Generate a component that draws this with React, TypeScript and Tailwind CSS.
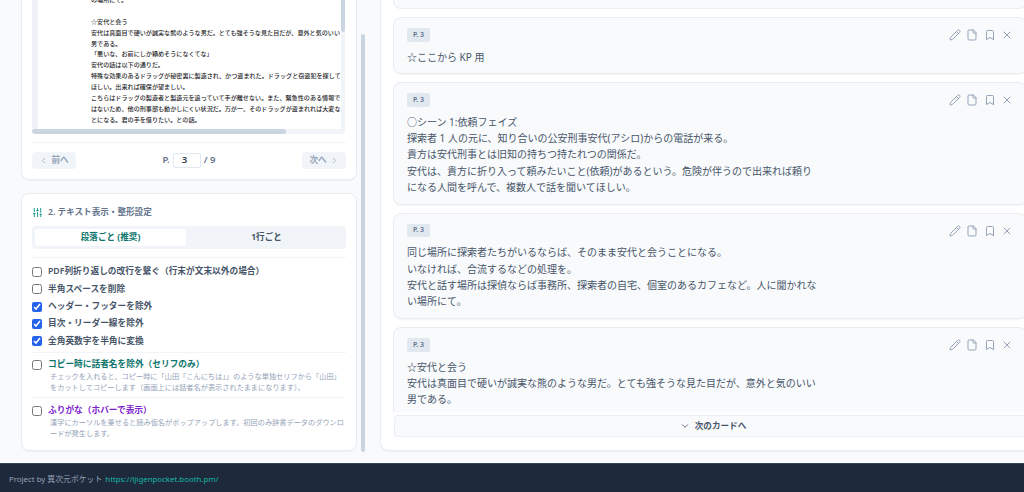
import { Bookmark, ChevronDown, ChevronLeft, ChevronRight, File, Pencil, SlidersVertical, X } from "lucide-react";

const pdfLines = [
  "の場所にて。",
  "",
  "☆安代と会う",
  "安代は真面目で硬いが誠実な熊のような男だ。とても強そうな見た目だが、意外と気のいい",
  "男である。",
  "「悪いな、お前にしか頼めそうになくてな」",
  "安代の話は以下の通りだ。",
  "特殊な効果のあるドラッグが秘密裏に製造され、かつ盗まれた。ドラッグと窃盗犯を探して",
  "ほしい。出来れば確保が望ましい。",
  "こちらはドラッグの製造者と製造元を追っていて手が離せない。また、緊急性のある情報で",
  "はないため、他の刑事部も動かしにくい状況だ。万が一、そのドラッグが盗まれれば大変なこ",
  "とになる。君の手を借りたい。との話。",
];

const options = [
  { label: "PDF列折り返しの改行を繋ぐ（行末が文末以外の場合）", checked: false },
  { label: "半角スペースを削除", checked: false },
  { label: "ヘッダー・フッターを除外", checked: true },
  { label: "目次・リーダー線を除外", checked: true },
  { label: "全角英数字を半角に変換", checked: true },
];

const cards = [
  ["☆ここから KP 用"],
  [
    "○シーン 1:依頼フェイズ",
    "探索者 1 人の元に、知り合いの公安刑事安代(アシロ)からの電話が来る。",
    "貴方は安代刑事とは旧知の持ちつ持たれつの関係だ。",
    "安代は、貴方に折り入って頼みたいこと(依頼)があるという。危険が伴うので出来れば頼り",
    "になる人間を呼んで、複数人で話を聞いてほしい。",
  ],
  [
    "同じ場所に探索者たちがいるならば、そのまま安代と会うことになる。",
    "いなければ、合流するなどの処理を。",
    "安代と話す場所は探偵ならば事務所、探索者の自宅、個室のあるカフェなど。人に聞かれな",
    "い場所にて。",
  ],
  [
    "☆安代と会う",
    "安代は真面目で硬いが誠実な熊のような男だ。とても強そうな見た目だが、意外と気のいい",
    "男である。",
  ],
];

function PdfPreview() {
  return (
    <div className="relative flex h-[160px] w-[313px] shrink-0 overflow-hidden rounded-b-[3px] bg-[#eef2f7]">
      <div className="ml-[6px] flex w-[400px] shrink-0 flex-col justify-end bg-white pb-[8px] pl-[53px]">
        {pdfLines.map((line, i) => (
          <div key={i} className="h-[10.95px] whitespace-nowrap text-[6.1px] leading-[10.95px] font-medium text-[#27272a]">
            {line}
          </div>
        ))}
      </div>
      {/* scrollbars */}
      <div className="absolute top-0 right-0 h-full w-[4px] bg-[#f1f5f9]">
        <div className="absolute top-0 h-[58px] w-full rounded-b-full bg-[#cbd5e1]" />
      </div>
      <div className="absolute bottom-0 left-0 h-[5px] w-full bg-[#f1f5f9]">
        <div className="h-full w-[254px] rounded-full bg-[#cbd5e1]" />
      </div>
    </div>
  );
}

function PagerButton({ label, side }: { label: string; side: "left" | "right" }) {
  return (
    <button className="flex h-[17px] w-[44px] items-center justify-center gap-[3px] rounded-[4px] bg-[#f1f5f9] text-[8.6px] font-semibold text-[#94a3b8]">
      {side === "left" && <ChevronLeft size={9} />}
      {label}
      {side === "right" && <ChevronRight size={9} />}
    </button>
  );
}

function NoteOption({
  label,
  desc,
  labelClass,
}: {
  label: string;
  desc: string;
  labelClass: string;
}) {
  return (
    <div className="flex gap-[6px]">
      <input type="checkbox" readOnly checked={false} className="mt-[1.5px] h-[10px] w-[10px] shrink-0" />
      <div className="min-w-0">
        <div className={`text-[8.7px] leading-[13px] font-bold ${labelClass}`}>{label}</div>
        <p className="pl-[2px] text-[7.2px] leading-[11px] text-[#94a3b8]">{desc}</p>
      </div>
    </div>
  );
}

function Card({ lines }: { lines: string[] }) {
  return (
    <div className="w-[634px] shrink-0 rounded-[8px] border border-[#e8edf3] bg-[#f8fafc] px-[13px] pt-[10px] pb-[8.7px] shadow-[0_1px_1px_rgba(15,23,42,0.04)]">
      <div className="flex items-center justify-between">
        <span className="flex h-[13.5px] w-[23px] items-center justify-center rounded-[2px] bg-[#e2e8f0] text-[7px] font-semibold text-[#64748b]">
          P. 3
        </span>
        <div className="flex items-center gap-[5.5px] text-[#94a3b8]">
          <Pencil size={12} />
          <File size={12} />
          <Bookmark size={12} />
          <X size={12} />
        </div>
      </div>
      <div className="mt-[7px] text-[10px] leading-[16.25px] text-[#475569]">
        {lines.map((line, i) => (
          <div key={i} className="whitespace-nowrap">
            {line}
          </div>
        ))}
      </div>
    </div>
  );
}

export default function App() {
  return (
    <div className="flex h-[492px] w-[1024px] flex-col overflow-hidden bg-[#f8fafc] font-['Noto_Sans','Noto_Sans_CJK_JP',sans-serif]">
      <div className="relative flex h-[463px] shrink-0 overflow-hidden">
        {/* left column */}
        <div className="flex w-[380px] shrink-0 flex-col justify-end gap-[13px] pr-[23px] pb-[12px] pl-[21px]">
          <div className="flex shrink-0 flex-col rounded-b-[8px] border border-t-0 border-[#e8edf3] bg-white px-[10px] pb-[10px] shadow-[0_1px_1px_rgba(15,23,42,0.04)]">
            <PdfPreview />
            <div className="mt-[8px] flex items-center justify-between border-t border-[#f1f5f9] pt-[9px]">
              <PagerButton label="前へ" side="left" />
              <div className="flex items-center gap-[3px] text-[9.6px] font-semibold text-[#64748b]">
                <span>P.</span>
                <span className="flex h-[15px] w-[28px] items-center rounded-[2px] border border-[#e2e8f0] bg-white pl-[8px] text-[#334155]">3</span>
                <span>/ 9</span>
              </div>
              <PagerButton label="次へ" side="right" />
            </div>
          </div>

          <div className="flex h-[258px] shrink-0 flex-col rounded-[8px] border border-[#e8edf3] bg-white px-[10px] pt-[12px] shadow-[0_1px_1px_rgba(15,23,42,0.04)]">
            <div className="flex items-center gap-[5px] text-[8.6px] font-semibold text-[#64748b]">
              <SlidersVertical size={11} className="text-[#0d9488]" />
              <span>2. テキスト表示・整形設定</span>
            </div>
            <div className="mt-[7px] flex h-[23px] items-center rounded-[4px] bg-[#f1f5f9] p-[3px] text-[8.6px] font-bold">
              <div className="flex h-[17px] w-[151px] items-center justify-center rounded-[3px] bg-white text-[#0f766e]">段落ごと (推奨)</div>
              <div className="flex h-[17px] flex-1 items-center justify-center pl-[4px] text-[#475569]">1行ごと</div>
            </div>
            <div className="mt-[8px] flex flex-col gap-[4.4px] border-t border-[#f1f5f9] pt-[7.4px]">
              {options.map((o) => (
                <label key={o.label} className="flex h-[13px] items-center gap-[6px] text-[8.7px] font-semibold text-[#475569]">
                  <input type="checkbox" readOnly checked={o.checked} className="h-[10px] w-[10px] shrink-0 accent-[#2563eb]" />
                  {o.label}
                </label>
              ))}
            </div>
            <div className="mt-[4.2px] border-t border-[#f1f5f9] pt-[5px] pb-[4px]">
              <NoteOption
                label="コピー時に話者名を除外（セリフのみ）"
                labelClass="text-[#0f766e]"
                desc="チェックを入れると、コピー時に「山田「こんにちは」」のような単独セリフから「山田」をカットしてコピーします（画面上には話者名が表示されたままになります）。"
              />
            </div>
            <div className="border-t border-[#f1f5f9] pt-[6px]">
              <NoteOption
                label="ふりがな（ホバーで表示）"
                labelClass="text-[#7e22ce]"
                desc="漢字にカーソルを乗せると読み仮名がポップアップします。初回のみ辞書データのダウンロードが発生します。"
              />
            </div>
          </div>
        </div>

        {/* page scrollbar */}
        <div className="absolute top-[34px] left-[361px] h-[418px] w-[4px] rounded-full bg-[#cbd5e1]" />

        {/* right column */}
        <div className="flex min-w-0 flex-1 flex-col justify-end pb-[12px]">
          <div className="h-[470px] w-[670px] shrink-0 rounded-l-[8px] border border-[#e8edf3] bg-white pl-[12px] shadow-[0_1px_1px_rgba(15,23,42,0.04)]">
            <div className="flex h-[430px] flex-col gap-[8px] overflow-hidden">
              <div className="h-[27px] w-[634px] shrink-0 rounded-b-[8px] border border-[#e8edf3] bg-[#f8fafc]" />
              {cards.map((lines, i) => (
                <Card key={i} lines={lines} />
              ))}
            </div>
            <button className="mt-[3px] ml-[1px] flex h-[22px] w-[638px] items-center justify-center gap-[5px] rounded-[4px] border border-[#e8edf3] bg-[#f8fafc] text-[8.6px] font-bold text-[#475569]">
              <ChevronDown size={10} />
              次のカードへ
            </button>
          </div>
        </div>
      </div>

      <footer className="flex h-[29px] shrink-0 items-center border-t border-[#334155] bg-[#1e293b] pt-[3px] pl-[9px] text-[7.85px] text-[#94a3b8]">
        <span>Project by 異次元ポケット</span>
        <span className="ml-[3px] text-[#14b8a6]">https://ijigenpocket.booth.pm/</span>
      </footer>
    </div>
  );
}
